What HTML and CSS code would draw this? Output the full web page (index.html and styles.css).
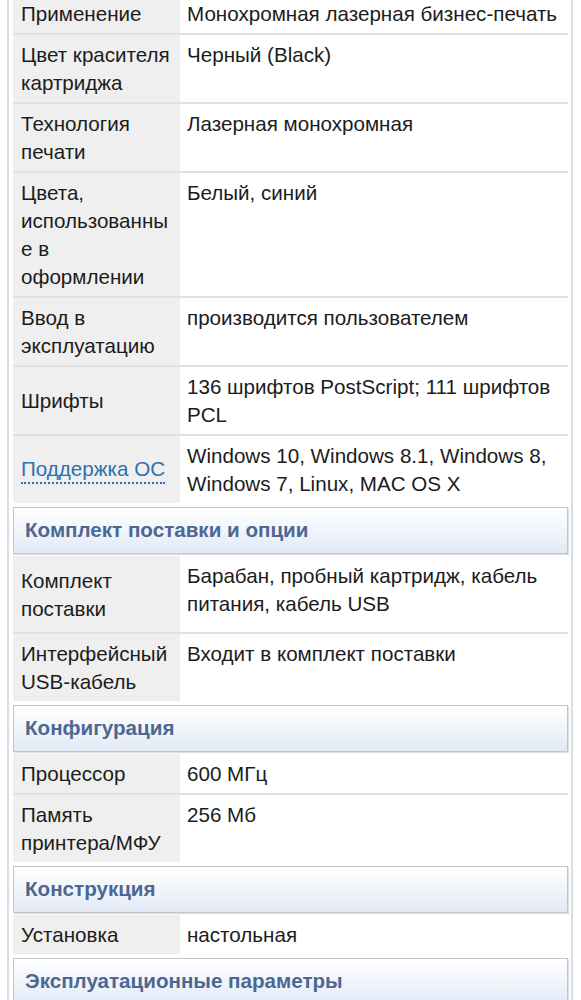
FILE: index.html
```html
<!DOCTYPE html>
<html lang="ru">
<head>
<meta charset="utf-8">
<title>Характеристики</title>
<link rel="stylesheet" href="styles.css">
</head>
<body>
<div class="wrap">
  <div class="specs">
    <div class="row first"><div class="k">Применение</div><div class="v">Монохромная лазерная бизнес-печать</div></div>
    <div class="row"><div class="k">Цвет красителя картриджа</div><div class="v">Черный (Black)</div></div>
    <div class="row"><div class="k">Технология печати</div><div class="v">Лазерная монохромная</div></div>
    <div class="row"><div class="k">Цвета, использованны е в оформлении</div><div class="v">Белый, синий</div></div>
    <div class="row"><div class="k">Ввод в эксплуатацию</div><div class="v">производится пользователем</div></div>
    <div class="row"><div class="k">Шрифты</div><div class="v">136 шрифтов PostScript; 111 шрифтов PCL</div></div>
    <div class="row"><div class="k"><span class="link">Поддержка ОС</span></div><div class="v">Windows 10, Windows 8.1, Windows 8, Windows 7, Linux, MAC OS X</div></div>

    <div class="sec">Комплект поставки и опции</div>
    <div class="row first"><div class="k">Комплект поставки</div><div class="v spaced">Барабан, пробный картридж, кабель питания, кабель USB</div></div>
    <div class="row"><div class="k">Интерфейсный USB-кабель</div><div class="v">Входит в комплект поставки</div></div>

    <div class="sec">Конфигурация</div>
    <div class="row first"><div class="k">Процессор</div><div class="v">600 МГц</div></div>
    <div class="row"><div class="k">Память принтера/МФУ</div><div class="v">256 Мб</div></div>

    <div class="sec">Конструкция</div>
    <div class="row first"><div class="k">Установка</div><div class="v">настольная</div></div>

    <div class="sec">Эксплуатационные параметры</div>
  </div>
</div>
</body>
</html>
```

FILE: styles.css
```css
html, body {
  margin: 0;
  padding: 0;
  background: #ffffff;
}

body {
  font-family: "Liberation Sans", Arial, Helvetica, sans-serif;
  font-size: 20.6px;
  line-height: 28px;
  color: #1c1c1c;
  overflow: hidden;
}

.wrap {
  margin: -6px 8px 0 7px;
  border-left: 2px solid #d6dee8;
  border-right: 2px solid #d6dee8;
  padding: 0 3px 0 4px;
  min-height: 1100px;
}

.specs {
  display: flex;
  flex-direction: column;
}

.row {
  display: grid;
  grid-template-columns: 167px 1fr;
  border-top: 2px solid #e1e1e1;
}

.row.first {
  border-top: none;
}

.k {
  background: #efefef;
  padding: 6px 4px 5px 8px;
  display: flex;
  align-items: center;
}

.v {
  padding: 6px 6px 5px 7px;
}

.v.spaced {
  padding-bottom: 14px;
}

.link {
  color: #2f6fb3;
  border-bottom: 2px dotted #2f6fb3;
  line-height: 26px;
}

.sec {
  margin: 4px 0 2px;
  border: 1px solid #c4c4c4;
  box-shadow: 1px 1px 1px rgba(0, 0, 0, 0.12);
  background: linear-gradient(#ffffff, #e2eaf6);
  color: #4c6892;
  font-weight: bold;
  padding: 8px 11px 9px 11px;
}
```
